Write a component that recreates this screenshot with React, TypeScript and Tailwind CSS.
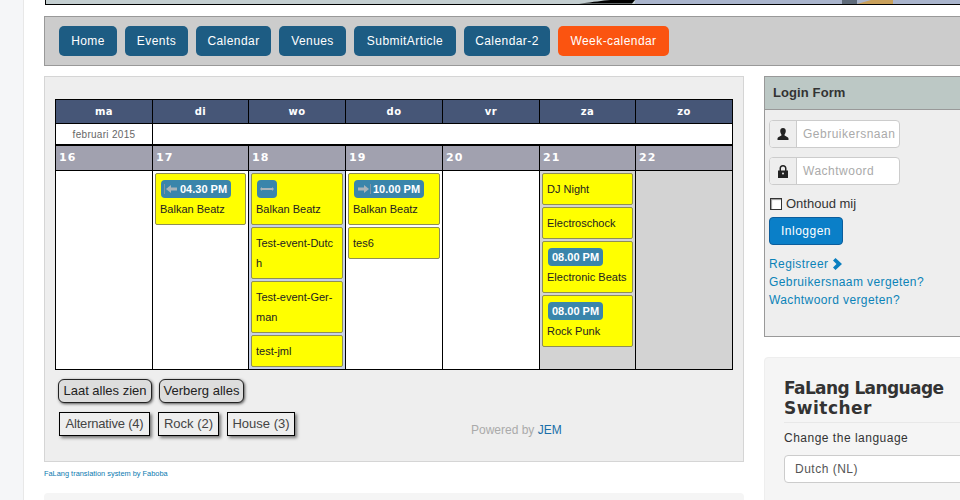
import React from 'react'

const menuItems = [
  { label: 'Home', width: 'w-[58px]' },
  { label: 'Events', width: 'w-[63px]' },
  { label: 'Calendar', width: 'w-[75px]' },
  { label: 'Venues', width: 'w-[67px]' },
  { label: 'SubmitArticle', width: 'w-[102px]' },
  { label: 'Calendar-2', width: 'w-[86px]' },
]
const filters = [
  { label: 'Alternative (4)', cls: 'w-[91px] tracking-[-0.2px]' },
  { label: 'Rock (2)', cls: 'w-[61px] tracking-normal' },
  { label: 'House (3)', cls: 'w-[68px] tracking-normal' },
]
const weekDays = ['ma', 'di', 'wo', 'do', 'vr', 'za', 'zo']
const dayNumbers = ['16', '17', '18', '19', '20', '21', '22']
const gridCols = 'grid grid-cols-[96px_96px_97px_97px_97px_96px_97px]'

type ArrowDir = 'start' | 'end' | 'both'

const ArrowIcon: React.FC<{ dir: ArrowDir }> = ({ dir }) => (
  <svg width="16" height="12" viewBox="0 0 16 12" className="shrink-0">
    {dir === 'start' && (
      <>
        <path d="M1.500 1v10" stroke="#7f93a3" strokeWidth="1" />
        <path d="M3 6l5-4v2.500h6v3H8V10z" fill="#aab3b9" />
      </>
    )}
    {dir === 'end' && (
      <>
        <path d="M14.500 1v10" stroke="#7f93a3" strokeWidth="1" />
        <path d="M13 6L8 2v2.500H2v3h6V10z" fill="#aab3b9" />
      </>
    )}
    {dir === 'both' && (
      <path d="M1 6l2-2v1h10V4l2 2-2 2V7H3v1z" fill="#aab3b9" />
    )}
  </svg>
)

const TimeBadge: React.FC<{ time?: string; dir?: ArrowDir }> = ({ time, dir }) => (
  <div className="flex h-[20px] items-center pl-[1px]">
    <div className={`flex h-[18px] items-center gap-[1px] rounded-[4px] bg-[#3a85ab] text-[11px] font-bold tracking-normal text-white ${dir ? 'pl-[2px]' : 'pl-1'} ${time ? 'pr-1' : 'pr-[2px]'}`}>
      {dir && <ArrowIcon dir={dir} />}
      {time && <span>{time}</span>}
    </div>
  </div>
)

interface CalEvent {
  title: string
  title2?: string
  time?: string
  dir?: ArrowDir
}

const EventCard: React.FC<{ event: CalEvent }> = ({ event }) => (
  <div className="rounded-[2px] border border-[#8f8f55] bg-[#ffff00] px-1 py-[5px] text-[11px] leading-[20px] tracking-normal whitespace-nowrap text-[#222]">
    {event.time || event.dir ? <TimeBadge time={event.time} dir={event.dir} /> : null}
    <div>{event.title}</div>
    {event.title2 && <div>{event.title2}</div>}
  </div>
)

const dayEvents: CalEvent[][] = [
  [],
  [{ title: 'Balkan Beatz', time: '04.30 PM', dir: 'start' }],
  [
    { title: 'Balkan Beatz', dir: 'both' },
    { title: 'Test-event-Dutc', title2: 'h' },
    { title: 'Test-event-Ger-', title2: 'man' },
    { title: 'test-jml' },
  ],
  [{ title: 'Balkan Beatz', time: '10.00 PM', dir: 'end' }, { title: 'tes6' }],
  [],
  [
    { title: 'DJ Night' },
    { title: 'Electroschock' },
    { title: 'Electronic Beats', time: '08.00 PM' },
    { title: 'Rock Punk', time: '08.00 PM' },
  ],
  [],
]

const dayBg = ['bg-white', 'bg-white', 'bg-[#c6d0e8]', 'bg-white', 'bg-white', 'bg-[#d3d3d3]', 'bg-[#d3d3d3]']

const Calendar: React.FC = () => (
  <div className="w-[678px] border border-black">
    <div className={gridCols}>
      {weekDays.map((day, i) => (
        <div
          key={day}
          className={`flex h-[23px] items-center justify-center bg-[#465677] font-['DejaVu_Sans'] text-[10px] font-bold tracking-[0.5px] text-white ${i > 0 ? 'border-l border-black' : ''}`}
        >
          {day}
        </div>
      ))}
    </div>
    <div className={`${gridCols} border-t border-black`}>
      <div className="flex h-[20px] items-center justify-center bg-white text-[10px] tracking-[0.3px] text-[#666]">februari 2015</div>
      <div className="col-span-6 border-l border-black bg-white" />
    </div>
    <div className={`${gridCols} border-t-2 border-black`}>
      {dayNumbers.map((n, i) => (
        <div
          key={n}
          className={`flex h-[24px] items-center bg-[#a1a1af] pl-[3px] font-['DejaVu_Sans'] text-[11px] font-bold tracking-[1px] text-white ${i > 0 ? 'border-l border-black' : ''}`}
        >
          {n}
        </div>
      ))}
    </div>
    <div className={`${gridCols} h-[199px] border-t border-black`}>
      {dayEvents.map((events, i) => (
        <div key={i} className={`flex flex-col gap-[2px] px-[2px] pt-[2px] ${dayBg[i]} ${i > 0 ? 'border-l border-black' : ''}`}>
          {events.map((event, j) => (
            <EventCard key={j} event={event} />
          ))}
        </div>
      ))}
    </div>
  </div>
)

const MainPanel: React.FC = () => (
  <div className="h-[386px] w-[700px] border border-[#d5d5d5] bg-[#eeeeee] pl-[10px] pt-[22px]">
    <Calendar />
    <div className="mt-[9px] flex gap-[7px] pl-[3px]">
      <button className="h-[24px] w-[94px] rounded-[6px] border border-[#222] bg-[#dddddd] text-[13px] tracking-normal text-[#222] shadow-[1px_1px_3px_#555]">Laat alles zien</button>
      <button className="h-[24px] w-[85px] rounded-[6px] border border-[#222] bg-[#dddddd] text-[13px] tracking-normal text-[#222] shadow-[1px_1px_3px_#555]">Verberg alles</button>
    </div>
    <div className="mt-[9px] flex items-start pl-[4px]">
      <div className="flex gap-2">
        {filters.map(filter => (
          <div key={filter.label} className={`flex h-[24px] items-center justify-center border border-black bg-[#eeeeee] text-[13px] text-[#444] shadow-[2px_2px_3px_#777] ${filter.cls}`}>
            {filter.label}
          </div>
        ))}
      </div>
      <div className="ml-[176px] mt-[9px] text-[12px] tracking-normal text-[#aaaaaa]">
        Powered by <span className="text-[#1a6ea8]">JEM</span>
      </div>
    </div>
  </div>
)

const InputGroup: React.FC<{ placeholder: string; icon: React.ReactNode }> = ({ placeholder, icon }) => (
  <div className="flex h-[28px] w-[131px] overflow-hidden rounded-[4px] border border-[#cccccc] bg-white">
    <div className="flex w-[27px] shrink-0 items-center justify-center border-r border-[#cccccc] bg-[#eeeeee]">{icon}</div>
    <div className="flex items-center whitespace-nowrap pl-[6px] text-[12px] text-[#aaaaaa]">{placeholder}</div>
  </div>
)

const LoginPanel: React.FC = () => (
  <div className="h-[261px] border border-r-0 border-[#999999] bg-[#eeeeee]">
    <div className="flex h-[33px] items-center border-b border-[#999999] bg-[#bcc8c5] pl-[8px] text-[13px] font-bold tracking-[0.1px] text-[#333]">
      Login Form
    </div>
    <div className="flex flex-col items-start pl-[4px] pt-[10px]">
      <InputGroup
        placeholder="Gebruikersnaan"
        icon={
          <svg width="12" height="12" viewBox="0 0 12 12">
            <path d="M6 0c1.800 0 2.800 1.300 2.800 3S7.800 6.200 7.400 7c0 1 3.600 1.700 4.100 3.500V12H.5v-1.500C1 8.700 4.600 8 4.600 7 4.200 6.200 3.200 4.700 3.200 3S4.200 0 6 0z" fill="#222" />
          </svg>
        }
      />
      <div className="mt-[9px]">
        <InputGroup
          placeholder="Wachtwoord"
          icon={
            <svg width="10" height="13" viewBox="0 0 10 13">
              <path d="M5 0C2.800 0 1.500 1.500 1.500 3.500V5.500H0V13h10V5.500H8.500V3.500C8.500 1.500 7.200 0 5 0zM3 5.500V3.500C3 2.300 3.800 1.400 5 1.400s2 .9 2 2.100v2z" fill="#222" fillRule="evenodd" />
              <circle cx="5" cy="8.500" r="1" fill="#eee" />
            </svg>
          }
        />
      </div>
      <label className="mt-[10px] flex h-[18px] items-center gap-[4px] pl-[1px] text-[13px] tracking-normal text-[#333]">
        <span className="h-[12px] w-[12px] border border-[#333] bg-white shadow-[inset_1px_1px_1px_#999]" />
        Onthoud mij
      </label>
      <button className="mt-[4px] h-[28px] w-[74px] rounded-[4px] border border-[#0b5d9c] bg-[#0a7fc8] text-[12px] text-white">Inloggen</button>
      <div className="mt-[10px] flex flex-col text-[12px] leading-[18px] tracking-[0.4px] text-[#0b83b8]">
        <div className="flex items-center gap-[5px]">
          Registreer
          <svg width="9" height="12" viewBox="0 0 9 12">
            <path d="M2.500 0L9 6l-6.500 6L0 9.500 3.500 6 0 2.500z" fill="#0b7fc0" />
          </svg>
        </div>
        <div>Gebruikersnaam vergeten?</div>
        <div>Wachtwoord vergeten?</div>
      </div>
    </div>
  </div>
)

const LanguagePanel: React.FC = () => (
  <div className="mt-[20px] h-[160px] rounded-[4px] border border-[#eeeeee] bg-[#f5f5f5] pl-[19px] pt-[20px]">
    <h3 className="font-['DejaVu_Sans'] text-[17px] font-bold leading-[20px] text-[#333]">
      <span className="tracking-[-0.6px]">FaLang Language</span>
      <br />
      Switcher
    </h3>
    <div className="mt-[4px] border-t border-[#e8e8e8] pt-[6px] text-[12px] leading-[18px] text-[#333]">Change the language</div>
    <div className="mt-[8px] flex h-[28px] items-center rounded-l-[4px] border border-[#cccccc] bg-white pl-[10px] text-[12px] text-[#555]">Dutch (NL)</div>
  </div>
)

const Banner: React.FC = () => (
  <div className="ml-[1px] h-[5px] shrink-0 border-b border-l border-black">
    <svg width="915" height="4" viewBox="0 0 915 4" preserveAspectRatio="none" className="block">
      <rect width="589" height="4" fill="#c3ced0" />
      <rect x="589" width="326" height="4" fill="#a9b4cc" />
      <path d="M533 3.500C550 2 555 .5 565 0h24l-3 3.500z" fill="#000" />
      <rect x="796" width="15" height="4" fill="#5f6b7a" />
      <path d="M811 4L825 0h22v4z" fill="#c9a05a" />
    </svg>
  </div>
)

const App: React.FC = () => (
  <div className="flex h-[500px] w-[960px] overflow-hidden bg-white font-['Liberation_Sans',sans-serif] tracking-[0.5px]">
    <div className="h-full w-[24px] shrink-0 border-r border-[#e8e8e8] bg-[#f5f6f8]" />
    <div className="flex w-[936px] flex-col pl-[20px]">
      <Banner />
      <nav className="mt-[11px] flex h-[50px] shrink-0 items-center gap-2 border border-r-0 border-[#999999] bg-[#cccccc] pl-[14px] tracking-[0.43px]">
        {menuItems.map(item => (
          <div key={item.label} className={`flex h-[30px] items-center justify-center rounded-[5px] bg-[#1d5c83] text-[12px] text-white ${item.width}`}>
            {item.label}
          </div>
        ))}
        <div className="flex h-[30px] w-[111px] items-center justify-center rounded-[5px] bg-[#fb5410] text-[12px] text-white">Week-calendar</div>
      </nav>
      <div className="mt-[10px] flex gap-[20px]">
        <div className="shrink-0">
          <MainPanel />
          <div className="mt-[7px] text-[7.400px] leading-[10px] tracking-normal text-[#0b7ab0]">FaLang translation system by Faboba</div>
          <div className="mt-[14px] h-[20px] rounded-[4px] bg-[#f5f5f5]" />
        </div>
        <div className="w-[300px] shrink-0">
          <LoginPanel />
          <LanguagePanel />
        </div>
      </div>
    </div>
  </div>
)

export default App
